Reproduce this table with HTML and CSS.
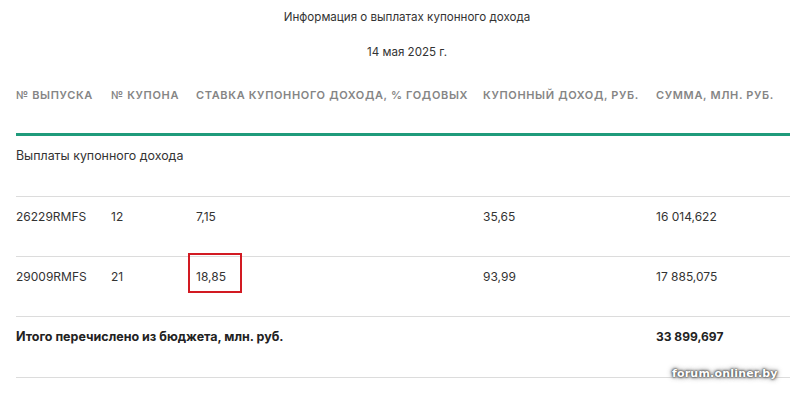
FILE: index.html
```html
<!DOCTYPE html>
<html lang="ru">
<head>
<meta charset="utf-8">
<link rel="stylesheet" href="styles.css">
</head>
<body>
<div class="page">
  <div class="caption">Информация о выплатах купонного дохода</div>
  <div class="date">14 мая 2025 г.</div>
  <div class="table">
    <div class="row head">
      <div>№ выпуска</div>
      <div>№ купона</div>
      <div>Ставка купонного дохода, % годовых</div>
      <div>Купонный доход, руб.</div>
      <div>Сумма, млн. руб.</div>
    </div>
    <div class="row section">
      <div class="span">Выплаты купонного дохода</div>
    </div>
    <div class="row">
      <div>26229RMFS</div>
      <div>12</div>
      <div>7,15</div>
      <div>35,65</div>
      <div>16 014,622</div>
    </div>
    <div class="row">
      <div>29009RMFS</div>
      <div>21</div>
      <div><span class="mark">18,85</span></div>
      <div>93,99</div>
      <div>17 885,075</div>
    </div>
    <div class="row total">
      <div class="span4">Итого перечислено из бюджета, млн. руб.</div>
      <div>33 899,697</div>
    </div>
  </div>
  <div class="watermark">forum.onliner.by</div>
</div>
</body>
</html>
```
FILE: styles.css
```css
html, body {
  margin: 0;
  padding: 0;
  background: #fff;
}
body {
  font-family: Inter, "Open Sans", sans-serif;
  color: #333;
  font-size: 12px;
  width: 800px;
  height: 396px;
  overflow: hidden;
}
.page {
  position: relative;
  padding: 0 10px 0 16px;
  height: 396px;
}
.caption {
  text-align: center;
  padding: 9px 0 0 8px;
  line-height: 16px;
  height: 16px;
  font-size: 11.6px;
  color: #333;
}
.date {
  text-align: center;
  padding-left: 8px;
  margin-top: 19px;
  line-height: 16px;
  font-size: 11.6px;
  color: #333;
}
.table {
  margin-top: 27px;
}
.row {
  display: grid;
  grid-template-columns: 95px 85px 287px 173px 134px;
  border-bottom: 1px solid #dcdcdc;
  align-items: start;
  padding-top: 12px;
  height: 47px;
  line-height: 16px;
  white-space: nowrap;
}
.row.head {
  font-size: 11px;
  font-weight: 600;
  letter-spacing: 0.65px;
  text-transform: uppercase;
  color: #858585;
  border-bottom: 3px solid #1f9b7b;
  padding-top: 0;
  height: 46px;
}
.row.section .span {
  grid-column: 1 / -1;
  font-size: 12.4px;
}
.row.section {
  height: 48px;
}
.row.total {
  font-weight: 700;
  color: #222;
  height: 48px;
}
.row.total .span4 {
  grid-column: 1 / 5;
  font-size: 12.5px;
}
.mark {
  display: inline-block;
  margin: -16px 0 -8px -8px;
  padding: 14px 6px 6px 6px;
  border: 2px solid #d21a22;
  width: 38px;
  height: 16px;
}
.watermark {
  position: absolute;
  left: 672px;
  top: 367px;
  font-family: "DejaVu Sans", sans-serif;
  font-weight: 700;
  font-size: 11px;
  line-height: 14px;
  color: #fff;
  letter-spacing: 0.2px;
  text-shadow: 0 0 1px #555, 0 0 2px #555, 0 0 3px #666, 0 0 4px #777, 0 0 6px #999;
}
```
